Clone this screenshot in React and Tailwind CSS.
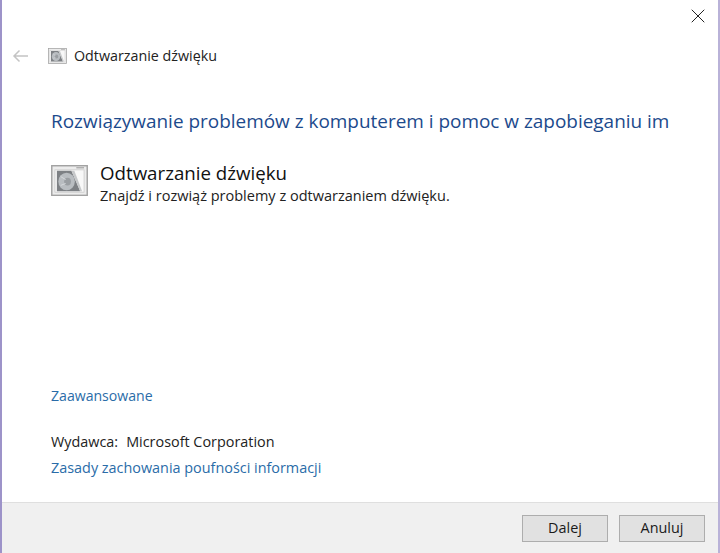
import React from 'react';
import { X } from 'lucide-react';

const AudioIcon = ({ size }) => (
    <svg width={size} height={size * 0.84} viewBox="0 0 38 32">
        <rect x="0.75" y="0.75" width="36.500" height="30.500" fill="#ececec" stroke="#a2a2a2" strokeWidth="1.500" />
        <rect x="4" y="5" width="30" height="23" fill="#f8f8f8" stroke="#c9c9c9" strokeWidth="0.800" />
        <path d="M6 6h15l9 21H6z" fill="#7d8084" />
        <path d="M21 6h3l8 21h-2z" fill="#c6c8ca" />
        <ellipse cx="16" cy="17" rx="8.500" ry="9" fill="#b9bdc1" />
        <ellipse cx="17" cy="17" rx="3.500" ry="4" fill="#9a9ea2" />
        <path d="M10 12l5 3M10 21l5-2" stroke="#d6d9dc" strokeWidth="1" />
        <rect x="26" y="2.200" width="8" height="1.300" fill="#a8a8a8" />
    </svg>
);

const Button = ({ children }) => (
    <button className="w-[86px] h-[27px] bg-[#e1e1e1] border border-[#adadad] text-[14.4px] text-[#1a1a1a] flex items-center justify-center">
        {children}
    </button>
);

export default function App() {
    return (
        <div className="w-[720px] h-[553px] flex flex-col bg-white border-l-2 border-r-2 border-l-[#9d93c9] border-r-[#b9b2d8] font-['Open_Sans','Noto_Sans',sans-serif] overflow-hidden">
            <div className="flex justify-end h-[42px] pr-[8px] pt-[4px] shrink-0">
                <X size={24} strokeWidth={1} className="text-[#222]" />
            </div>

            <div className="flex items-center h-[28px] pl-[10px] shrink-0">
                <svg width="17" height="14" viewBox="0 0 17 14" fill="none" stroke="#c4c4c4" strokeWidth="1.500">
                    <path d="M16 7H2M7.500 1.500 2 7l5.500 5.500" />
                </svg>
                <div className="ml-[19px]">
                    <AudioIcon size={19} />
                </div>
                <span className="ml-[7px] text-[14.3px] text-[#222]">Odtwarzanie dźwięku</span>
            </div>

            <div className="flex-1 flex flex-col pl-[49px]">
                <h1 className="mt-[39px] text-[18.95px] leading-[24px] text-[#1c4a8c] whitespace-nowrap">
                    Rozwiązywanie problemów z komputerem i pomoc w zapobieganiu im
                </h1>

                <div className="flex mt-[28px]">
                    <div className="mt-[4px]">
                        <AudioIcon size={37} />
                    </div>
                    <div className="ml-[12px]">
                        <div className="text-[18.7px] leading-[24px] text-[#111]">Odtwarzanie dźwięku</div>
                        <div className="mt-[2px] text-[14.5px] leading-[18px] text-[#222]">Znajdź i rozwiąż problemy z odtwarzaniem dźwięku.</div>
                    </div>
                </div>

                <a className="mt-[181px] text-[14.1px] leading-[20px] text-[#2a6ca8]">Zaawansowane</a>
                <div className="mt-[26px] text-[14.4px] leading-[20px] text-[#222]">
                    Wydawca:<span className="ml-[8px]">Microsoft Corporation</span>
                </div>
                <a className="mt-[6px] text-[14.4px] leading-[20px] text-[#2a6ca8]">Zasady zachowania poufności informacji</a>
            </div>

            <div className="h-[51px] shrink-0 bg-[#f0f0f0] border-t border-[#dfdfdf] flex items-center justify-end gap-[11px] pr-[13px]">
                <Button>Dalej</Button>
                <Button>Anuluj</Button>
            </div>
        </div>
    );
}
